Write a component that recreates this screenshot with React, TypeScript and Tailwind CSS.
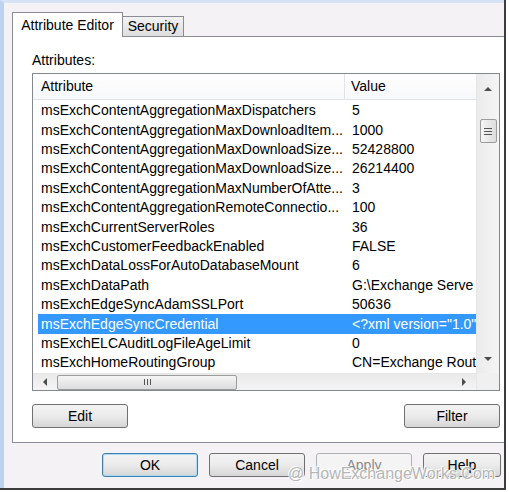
const rows: [string, string][] = [
  ["msExchContentAggregationMaxDispatchers", "5"],
  ["msExchContentAggregationMaxDownloadItem...", "1000"],
  ["msExchContentAggregationMaxDownloadSize...", "52428800"],
  ["msExchContentAggregationMaxDownloadSize...", "26214400"],
  ["msExchContentAggregationMaxNumberOfAtte...", "3"],
  ["msExchContentAggregationRemoteConnectio...", "100"],
  ["msExchCurrentServerRoles", "36"],
  ["msExchCustomerFeedbackEnabled", "FALSE"],
  ["msExchDataLossForAutoDatabaseMount", "6"],
  ["msExchDataPath", "G:\\Exchange Serve"],
  ["msExchEdgeSyncAdamSSLPort", "50636"],
  ["msExchEdgeSyncCredential", '<?xml version="1.0"'],
  ["msExchELCAuditLogFileAgeLimit", "0"],
  ["msExchHomeRoutingGroup", "CN=Exchange Rout"],
];

const Button = (props: any) => {
  const { label, className, focused, disabled } = props;
  return (
    <div
      className={`flex items-center justify-center h-[24px] rounded-[3px] border text-[14px] ${
        focused
          ? "border-[#3c7fb1] shadow-[inset_0_0_0_1px_#a9dbf6]"
          : disabled
          ? "border-[#adb2b5] text-[#8a8a8a]"
          : "border-[#707070]"
      } ${
        disabled
          ? "bg-[#f4f4f4]"
          : "bg-gradient-to-b from-[#f3f3f3] via-[#ebebeb] to-[#d6d6d6]"
      } ${className}`}
    >
      {label}
    </div>
  );
};

const Arrow = (props: any) => {
  const { dir } = props;
  const pts: Record<string, string> = {
    up: "0,5 4,1 8,5",
    down: "0,1 4,5 8,1",
    left: "5,0 1,4 5,8",
    right: "1,0 5,4 1,8",
  };
  const vertical = dir === "up" || dir === "down";
  return (
    <svg
      width={vertical ? 8 : 6}
      height={vertical ? 6 : 8}
      viewBox={vertical ? "0 0 8 6" : "0 0 6 8"}
    >
      <polygon points={pts[dir]} fill="#4d4d4d" />
    </svg>
  );
};

export default function App() {
  return (
    <div
      className="w-[509px] h-[492px] bg-white overflow-hidden relative text-black"
      style={{ fontFamily: '"Liberation Sans", Arial, sans-serif' }}
    >
      <div className="w-[506px] h-[490px] bg-[#3d3d3d] pr-[2px] pb-[2px]">
        <div className="h-full flex flex-col bg-[#f4f2f4] border-l-[4px] border-l-[#bcd3ef] border-t-[3px] border-t-[#d6e3f4]">
          {/* tabs */}
          <div className="flex items-end h-[33px] pl-[8px]">
            <div className="relative z-10 h-[25px] -mb-px w-[111px] bg-white border border-b-0 border-[#898c95] flex items-center justify-center text-[14px]">
              Attribute Editor
            </div>
            <div className="h-[20px] w-[61px] border border-l-0 border-b-0 border-[#898c95] bg-gradient-to-b from-[#f2f2f2] to-[#dedede] flex items-center justify-center text-[14px]">
              Security
            </div>
          </div>

          {/* tab panel */}
          <div className="ml-[8px] h-[407px] bg-white border border-r-0 border-[#898c95] flex flex-col pl-[19px] pr-[4px]">
            <div className="h-[36px] flex items-end pb-[2px] text-[14px]">
              Attributes:
            </div>

            {/* list box */}
            <div className="h-[318px] border border-[#828790] flex">
              <div className="flex-1 flex flex-col min-w-0">
                <div className="h-[26px] flex items-center border-b border-[#e3e3e3] bg-gradient-to-b from-white to-[#f7f8fa] text-[14px]">
                  <div className="w-[312px] pl-[8px] border-r border-[#e3e3e3] h-full flex items-center">
                    Attribute
                  </div>
                  <div className="pl-[6px]">Value</div>
                </div>
                <div className="flex-1 flex flex-col pt-[1px] overflow-hidden">
                  {rows.map(([k, v], i) => (
                    <div
                      key={i}
                      className={`h-[19.4px] shrink-0 flex items-center ml-[5px] text-[14px] whitespace-nowrap ${
                        i === 11 ? "bg-[#3399ff] text-white" : ""
                      }`}
                    >
                      <div className="w-[307px] pl-[3px] overflow-hidden">{k}</div>
                      <div className="pl-[7px] flex-1 overflow-hidden">{v}</div>
                    </div>
                  ))}
                </div>
                {/* horizontal scrollbar */}
                <div className="h-[17px] shrink-0 flex items-center bg-gradient-to-b from-[#eaeaea] to-[#f4f4f4] border-t border-[#e6e6e6]">
                  <div className="w-[24px] flex justify-center">
                    <Arrow dir="left" />
                  </div>
                  <div className="w-[180px] h-[15px] rounded-[2px] border border-[#9c9c9c] bg-gradient-to-b from-[#f5f5f5] to-[#dcdcdc] flex items-center justify-center gap-[2px]">
                    <div className="w-px h-[6px] bg-[#555]" />
                    <div className="w-px h-[6px] bg-[#555]" />
                    <div className="w-px h-[6px] bg-[#555]" />
                  </div>
                  <div className="flex-1" />
                  <div className="w-[24px] flex justify-center">
                    <Arrow dir="right" />
                  </div>
                </div>
              </div>
              {/* vertical scrollbar */}
              <div className="w-[23px] shrink-0 flex flex-col border-l border-[#e6e6e6]">
                <div className="flex-1 flex flex-col items-center bg-gradient-to-r from-[#ebebeb] to-[#f5f5f5]">
                  <div className="h-[30px] flex items-center">
                    <Arrow dir="up" />
                  </div>
                  <div className="mt-[15px] w-[17px] h-[24px] rounded-[2px] border border-[#9c9c9c] bg-gradient-to-r from-[#f5f5f5] to-[#dcdcdc] flex flex-col items-center justify-center gap-[2px]">
                    <div className="h-px w-[8px] bg-[#555]" />
                    <div className="h-px w-[8px] bg-[#555]" />
                    <div className="h-px w-[8px] bg-[#555]" />
                  </div>
                  <div className="flex-1" />
                  <div className="h-[28px] flex items-center">
                    <Arrow dir="down" />
                  </div>
                </div>
                <div className="h-[17px] bg-[#f0f0f0]" />
              </div>
            </div>

            <div className="flex justify-between mt-[13px]">
              <Button label="Edit" className="w-[96px]" />
              <Button label="Filter" className="w-[96px]" />
            </div>
          </div>

          {/* bottom buttons */}
          <div className="flex justify-end gap-[11px] pt-[10px] pr-[3px]">
            <Button label="OK" className="w-[96px]" focused />
            <Button label="Cancel" className="w-[96px]" />
            <Button label="Apply" className="w-[96px]" disabled />
            <Button label="Help" className="w-[78px]" />
          </div>
        </div>
      </div>

      <div
        className="absolute left-[288px] top-[464px] text-[16px] leading-[20px] text-[#b5b5b5] whitespace-nowrap"
        style={{ textShadow: "0 0 1px #fff, 1px 1px 0 #fff, -1px -1px 0 #fff" }}
      >
        @ HowExchangeWorks.Com
      </div>
    </div>
  );
}
